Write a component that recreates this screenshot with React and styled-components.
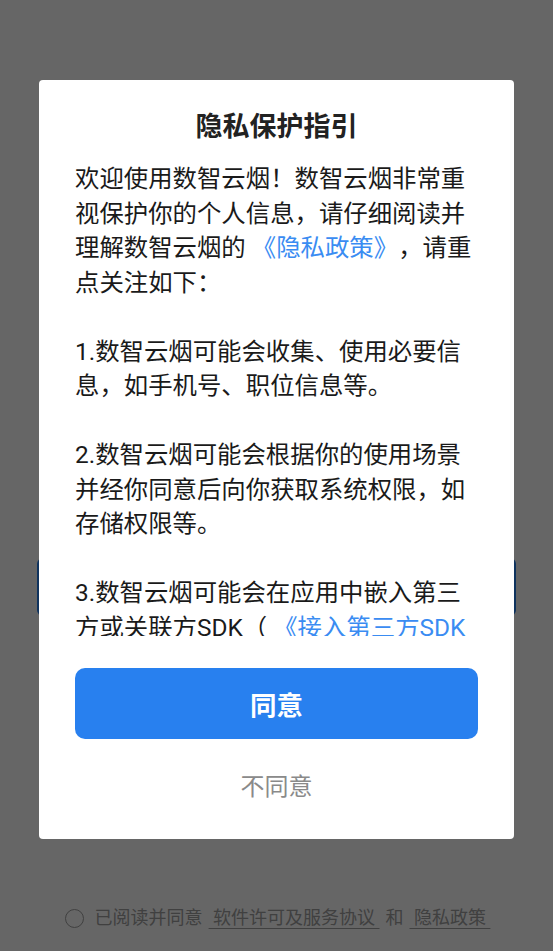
import React from 'react';
import styled, { createGlobalStyle } from 'styled-components';

const GlobalStyle = createGlobalStyle`
  html, body {
    margin: 0;
    padding: 0;
    background: #ffffff;
  }
  body {
    font-family: Roboto, "Noto Sans CJK SC", sans-serif;
    text-spacing-trim: space-all;
  }
`;

const policyParagraphs = [
  {
    key: 'intro',
    parts: [
      { text: '欢迎使用数智云烟！数智云烟非常重视保护你的个人信息，请仔细阅读并理解数智云烟的 ' },
      { text: '《隐私政策》', link: true },
      { text: '，请重点关注如下：' },
    ],
  },
  {
    key: 'p1',
    parts: [{ text: '1.数智云烟可能会收集、使用必要信息，如手机号、职位信息等。' }],
  },
  {
    key: 'p2',
    parts: [{ text: '2.数智云烟可能会根据你的使用场景并经你同意后向你获取系统权限，如存储权限等。' }],
  },
  {
    key: 'p3',
    parts: [
      { text: '3.数智云烟可能会在应用中嵌入第三方或关联方SDK（ ' },
      { text: '《接入第三方SDK目录》', link: true },
      { text: ' ），用于实现消息推送、统计分析等功能。' },
    ],
  },
  {
    key: 'p4',
    parts: [{ text: '4.未经你的同意，我们不会向第三方共享或对外提供你的个人信息。' }],
  },
];

const PrivacyGuide = () => {
  return (
    <>
      <GlobalStyle />
      <Page>
        <LoginButton>登录</LoginButton>
        <AgreementRow>
          <Radio />
          <span>已阅读并同意</span>
          <AgreementLink> 软件许可及服务协议 </AgreementLink>
          <span>和</span>
          <AgreementLink> 隐私政策 </AgreementLink>
        </AgreementRow>
      </Page>

      <Overlay>
        <Dialog>
          <DialogTitle>隐私保护指引</DialogTitle>
          <PolicyScroll>
            {policyParagraphs.map(p => (
              <PolicyParagraph key={p.key}>
                {p.parts.map((part, i) =>
                  part.link
                    ? <PolicyLink key={i}>{part.text}</PolicyLink>
                    : <React.Fragment key={i}>{part.text}</React.Fragment>
                )}
              </PolicyParagraph>
            ))}
          </PolicyScroll>
          <AgreeButton>同意</AgreeButton>
          <DisagreeButton>不同意</DisagreeButton>
        </Dialog>
      </Overlay>
    </>
  );
};

// Styled Components
const Page = styled.div`
  height: 951px;
  box-sizing: border-box;
  display: flex;
  flex-direction: column;
  align-items: center;
  padding-top: 558px;
  background: #ffffff;
`;

const LoginButton = styled.div`
  width: 479px;
  height: 58px;
  border-radius: 6px;
  background: #2680eb;
  color: #ffffff;
  font-size: 22px;
  display: flex;
  align-items: center;
  justify-content: center;
`;

const AgreementRow = styled.div`
  margin-top: 289px;
  padding-left: 2px;
  display: flex;
  align-items: center;
  justify-content: center;
  gap: 6px;
  font-size: 18px;
  line-height: 26px;
  color: #a0a0a0;
  white-space: pre;
`;

const Radio = styled.span`
  width: 17px;
  height: 17px;
  border: 1.7px solid #a0a0a0;
  border-radius: 50%;
  margin-right: 5px;
`;

const AgreementLink = styled.span`
  text-decoration: underline;
  text-underline-offset: 4px;
`;

const Overlay = styled.div`
  position: fixed;
  inset: 0;
  background: rgba(0, 0, 0, 0.6);
  display: flex;
  justify-content: center;
  align-items: flex-start;
  padding-top: 80px;
`;

const Dialog = styled.div`
  width: 475px;
  box-sizing: border-box;
  background: #ffffff;
  border-radius: 4px;
  padding: 30px 36px 35px;
  display: flex;
  flex-direction: column;
`;

const DialogTitle = styled.div`
  font-size: 27px;
  line-height: 34px;
  font-weight: 700;
  color: #222222;
  text-align: center;
`;

const PolicyScroll = styled.div`
  margin-top: 18px;
  height: 474px;
  overflow-y: auto;
  scrollbar-width: none;
  &::-webkit-scrollbar {
    display: none;
  }
`;

const PolicyParagraph = styled.p`
  margin: 0 0 34.5px;
  font-size: 24.4px;
  line-height: 34.5px;
  color: #1a1a1a;
`;

const PolicyLink = styled.span`
  color: #3a8cf2;
`;

const AgreeButton = styled.div`
  margin-top: 32px;
  height: 71px;
  border-radius: 10px;
  background: #2880ef;
  color: #ffffff;
  font-size: 26.5px;
  font-weight: 700;
  display: flex;
  align-items: center;
  justify-content: center;
  cursor: pointer;
`;

const DisagreeButton = styled.div`
  margin-top: 31px;
  color: #8a8a8a;
  font-size: 24px;
  line-height: 34px;
  text-align: center;
  cursor: pointer;
`;

export default PrivacyGuide;
